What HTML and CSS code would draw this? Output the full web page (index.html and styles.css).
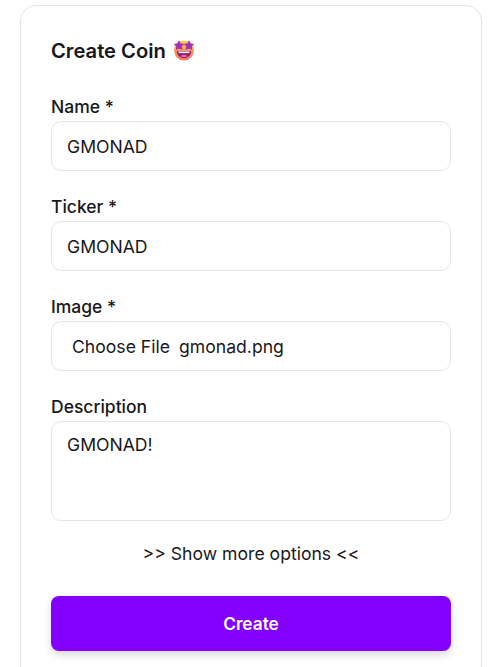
FILE: index.html
```html
<!doctype html>
<html lang="en">
<head>
    <meta charset="UTF-8">
    <title>Create Coin</title>
    <link rel="stylesheet" href="styles.css">
</head>

<body>
<form class="card">
    <div class="title">
        <span>Create Coin</span>
        <svg class="emoji" viewBox="0 0 22 22" width="22" height="22">
            <defs>
                <linearGradient id="face" x1="0" y1="0" x2="0" y2="1">
                    <stop offset="0" stop-color="#fbc94f"/>
                    <stop offset="1" stop-color="#f4725e"/>
                </linearGradient>
            </defs>
            <circle cx="11" cy="11.500" r="10" fill="url(#face)"/>
            <path d="M6 1.300l1.700 3.100 3.500.6-2.500 2.500.5 3.500L6 9.500l-3.200 1.500.5-3.500L.8 5l3.500-.6z" fill="#a22fb5"/>
            <path d="M16 1.300l1.700 3.100 3.500.6-2.500 2.500.5 3.500L16 9.500l-3.200 1.500.5-3.500L10.800 5l3.500-.6z" fill="#a22fb5"/>
            <path d="M4.500 12h13c.5 0 .8.400.7.900-.6 3.500-3.500 6.100-7.200 6.100s-6.600-2.600-7.200-6.100c-.1-.5.2-.9.700-.9z" fill="#8c1f78"/>
            <path d="M5.500 12.500h11v1.600h-11z" fill="#fff"/>
            <path d="M7.500 17.200c.9-1 2.100-1.500 3.500-1.500s2.600.5 3.500 1.500c-1 .7-2.200 1.100-3.500 1.100s-2.500-.4-3.500-1.100z" fill="#f0609a"/>
        </svg>
    </div>

    <label class="field">
        <span class="label">Name *</span>
        <input type="text" class="input" value="GMONAD">
    </label>
    <label class="field">
        <span class="label">Ticker *</span>
        <input type="text" class="input" value="GMONAD">
    </label>
    <div class="field">
        <span class="label">Image *</span>
        <div class="input file">
            <span class="file-btn">Choose File</span>
            <span>gmonad.png</span>
        </div>
    </div>
    <label class="field">
        <span class="label">Description</span>
        <textarea class="input area">GMONAD!</textarea>
    </label>

    <div class="more">&gt;&gt; Show more options &lt;&lt;</div>
    <button type="button" class="create">Create</button>
</form>
</body>
</html>
```

FILE: styles.css
```css
html,body{
    height: 100%;
    overflow: hidden;
}
*{
    box-sizing: border-box;
}
body{
    margin: 0;
    background: #fff;
    color: #18181b;
    font-family: Inter, "Liberation Sans", sans-serif;
    font-size: 17.6px;
}
.card{
    display: flex;
    flex-direction: column;
    width: 462px;
    margin: 5px 0 0 20px;
    padding: 30px;
    border: 1px solid #e5e5e5;
    border-radius: 16px;
}
.title{
    display: flex;
    align-items: center;
    gap: 7px;
    height: 30px;
    margin-top: -1px;
    margin-bottom: 30px;
    font-size: 20.2px;
    font-weight: 600;
}
.emoji{
    flex-shrink: 0;
}
.field{
    display: block;
    margin-bottom: 24px;
}
.label{
    display: block;
    height: 24px;
    margin-bottom: 2px;
    line-height: 24px;
    font-size: 17.5px;
    font-weight: 450;
}
.input{
    display: block;
    width: 100%;
    height: 50px;
    padding: 1px 15px 0;
    border: 1px solid #e5e5e5;
    border-radius: 10px;
    background: #fff;
    color: #18181b;
    font-family: inherit;
    font-size: 17.6px;
    outline: none;
}
.file{
    display: flex;
    align-items: center;
    gap: 9px;
    padding-left: 20px;
}
.area{
    height: 100px;
    padding-top: 11px;
    line-height: 24px;
    resize: none;
}
.more{
    margin-top: -3px;
    line-height: 24px;
    text-align: center;
}
.create{
    height: 55px;
    margin-top: 30px;
    border: none;
    border-radius: 8px;
    background: #8300ff;
    color: #fff;
    font-family: inherit;
    font-size: 17.3px;
    font-weight: 600;
    box-shadow: 0 4px 8px rgba(0,0,0,.15);
}
```
